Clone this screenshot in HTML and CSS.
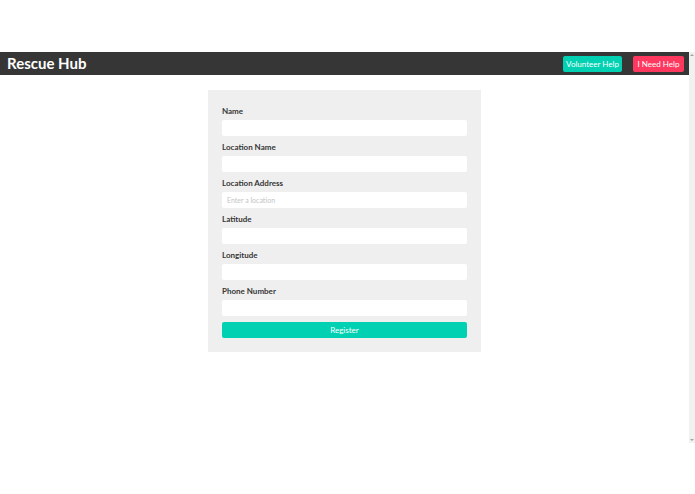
FILE: index.html
```html
<!DOCTYPE html>
<html>
<head>
<meta charset="utf-8">
<title>Rescue Hub</title>
<link rel="stylesheet" href="styles.css">
</head>
<body>
<div class="top-space"></div>
<div class="frame">
  <div class="page">
    <nav class="navbar">
      <div class="brand">Rescue Hub</div>
      <div class="nav-buttons">
        <a class="btn btn-primary">Volunteer Help</a>
        <a class="btn btn-danger">I Need Help</a>
      </div>
    </nav>
    <div class="content">
      <form class="card">
        <div class="field">
          <label class="label">Name</label>
          <input class="input" type="text">
        </div>
        <div class="field">
          <label class="label">Location Name</label>
          <input class="input" type="text">
        </div>
        <div class="field">
          <label class="label">Location Address</label>
          <input class="input" type="text" placeholder="Enter a location">
        </div>
        <div class="field">
          <label class="label">Latitude</label>
          <input class="input" type="text">
        </div>
        <div class="field">
          <label class="label">Longitude</label>
          <input class="input" type="text">
        </div>
        <div class="field">
          <label class="label">Phone Number</label>
          <input class="input" type="text">
        </div>
        <button class="register" type="button">Register</button>
      </form>
    </div>
  </div>
  <div class="scrollbar">
    <span class="arrow arrow-up"></span>
    <span class="arrow arrow-down"></span>
  </div>
</div>
</body>
</html>
```
FILE: styles.css
```css
* { box-sizing: border-box; }
html, body {
  margin: 0;
  padding: 0;
  background: #ffffff;
  font-family: Lato, "Open Sans", "Liberation Sans", sans-serif;
}
.top-space { height: 52px; }
.frame {
  display: flex;
  width: 695px;
  height: 391px;
}
.page {
  flex: 1;
  display: flex;
  flex-direction: column;
}
.navbar {
  height: 23px;
  background: #363636;
  display: flex;
  align-items: center;
  justify-content: space-between;
  padding: 0 5px 0 7px;
}
.brand {
  color: #ffffff;
  font-weight: 700;
  font-size: 15px;
  line-height: 1;
}
.nav-buttons {
  display: flex;
  gap: 11px;
}
.btn {
  display: flex;
  align-items: center;
  justify-content: center;
  height: 16px;
  padding: 0;
  border-radius: 2px;
  color: #ffffff;
  font-size: 8px;
  line-height: 1;
  white-space: nowrap;
}
.btn-primary { background: #00d1b2; width: 59px; }
.btn-danger { background: #ff3860; width: 51px; }
.content {
  flex: 1;
  display: flex;
  justify-content: center;
  padding-top: 15px;
}
.card {
  width: 273px;
  height: 262px;
  background: #efefef;
  padding: 16px 14px 14px;
  margin: 0;
  display: flex;
  flex-direction: column;
}
.field {
  display: flex;
  flex-direction: column;
  gap: 4px;
  margin-bottom: 6px;
}
.label {
  display: block;
  height: 10px;
  font-size: 8px;
  line-height: 10px;
  font-weight: 700;
  color: #363636;
}
.input {
  display: block;
  width: 100%;
  height: 16px;
  border: none;
  border-radius: 2px;
  background: #ffffff;
  margin: 0;
  padding: 0 5px;
  font-family: inherit;
  font-size: 7px;
  outline: none;
}
.input::placeholder { color: #c4c4c4; }
.register {
  display: block;
  width: 100%;
  height: 16px;
  margin: 0;
  border: none;
  border-radius: 2px;
  background: #00d1b2;
  color: #ffffff;
  font-family: inherit;
  font-size: 8px;
  padding: 0;
}
.scrollbar {
  width: 6px;
  background: #f1f1f1;
  position: relative;
}
.arrow {
  position: absolute;
  left: 1px;
  width: 0;
  height: 0;
  border-left: 2px solid transparent;
  border-right: 2px solid transparent;
}
.arrow-up { top: 2px; border-bottom: 2px solid #a3a3a3; }
.arrow-down { bottom: 2px; border-top: 2px solid #a3a3a3; }
```
